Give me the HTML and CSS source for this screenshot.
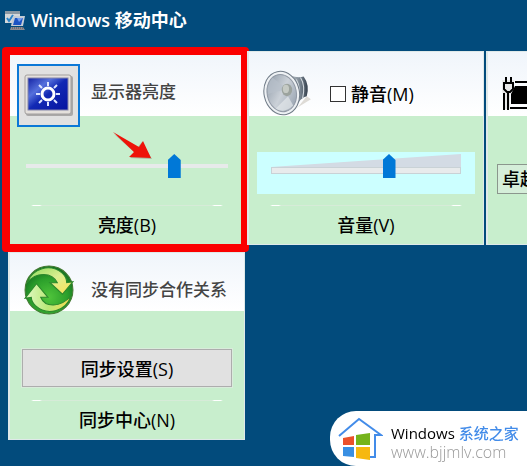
FILE: index.html
```html
<!DOCTYPE html>
<html lang="zh-CN">
<head>
	<meta charset="utf-8">
	<meta name="viewport" content="width=device-width, initial-scale=1.0">
	<title>Windows 移动中心</title>
	<link rel="stylesheet" href="styles.css">
</head>
<body>
	<header class="titlebar">
		<svg class="title-icon" viewBox="0 0 21 21" aria-hidden="true">
			<rect x="0" y="1" width="15" height="12" fill="#d5d8da"/>
			<path d="M0 1h15v3H0z" fill="#8b98a3"/>
			<path d="M2 8l2 3 4-6" fill="none" stroke="#2a83c9" stroke-width="2"/>
			<path d="M8 6h12l-2 10H6z" fill="#c4ccd6"/>
			<path d="M10 8h8l-2 7H8z" fill="#1d54c4"/>
			<path d="M12 8h6l-4 4z" fill="#6f9bee"/>
			<path d="M6 17h12l2 3H5z" fill="#8e8c91"/>
			<path d="M7 18h11" stroke="#514f5d" stroke-dasharray="1 1"/>
		</svg>
		<h1>Windows 移动中心</h1>
	</header>

	<main class="tiles">
		<section class="tile">
			<div class="tile-head">
				<button class="icon-button" type="button" aria-labelledby="brightness-title">
					<svg viewBox="0 0 50 42" width="50" height="42">
						<defs>
							<linearGradient id="screen" x1="0" y1="0" x2="1" y2="1">
								<stop offset="0" stop-color="#1423a4"/>
								<stop offset=".3" stop-color="#5570dc"/>
								<stop offset=".5" stop-color="#1229b4"/>
								<stop offset="1" stop-color="#0613a0"/>
							</linearGradient>
						</defs>
						<rect x="2" y="2" width="47" height="40" rx="2" fill="#aaa8a8"/>
						<rect x="1" y="1" width="46" height="39" rx="2" fill="#e4e0dc" stroke="#a29f9e"/>
						<rect x="4" y="4" width="40" height="32" fill="url(#screen)" stroke="#8485aa"/>
						<circle cx="24" cy="20" r="6" fill="none" stroke="#fff" stroke-width="3"/>
						<path d="M24 8v4M24 28v4M12 20h4M32 20h4M15 11l3 3M30 26l3 3M15 29l3-3M30 14l3-3" stroke="#dde5ff" stroke-width="2"/>
					</svg>
				</button>
				<h2 id="brightness-title">显示器亮度</h2>
			</div>
			<div class="tile-body">
				<div class="control">
					<input class="slider" type="range" id="brightness" min="0" max="100" value="75">
				</div>
				<label class="tile-label" for="brightness">亮度(B)</label>
			</div>
			<div class="highlight"></div>
			<svg class="arrow" viewBox="0 0 42 30" aria-hidden="true">
				<path d="M2 3L25 17L30 11L40 28L18 27L23 22Z" fill="#876d61" opacity=".45"/>
				<path d="M1 1L27 16L31 10L39 27L17 26L22 21Z" fill="#ee1309"/>
			</svg>
		</section>

		<section class="tile">
			<div class="tile-head">
				<svg class="head-icon" viewBox="0 0 48 48" aria-hidden="true">
					<defs>
						<linearGradient id="cone" x1="0" y1="0" x2="1" y2="1">
							<stop offset="0" stop-color="#8995a3"/>
							<stop offset=".5" stop-color="#cbd1d8"/>
							<stop offset="1" stop-color="#8d99a8"/>
						</linearGradient>
						<linearGradient id="magnet" x1="0" y1="0" x2="1" y2="0">
							<stop offset="0" stop-color="#c1c8cd"/>
							<stop offset=".6" stop-color="#75818d"/>
							<stop offset="1" stop-color="#333e4b"/>
						</linearGradient>
					</defs>
					<path d="M28 42L46 31L42 28L34 38Z" fill="#dedbd6"/>
					<path d="M26 8Q34 11 39 9Q45 17 42 28Q37 29 30 38Z" fill="url(#magnet)"/>
					<path d="M36 10Q41 18 38 30M32 12Q37 21 34 32" fill="none" stroke="#d6dce1" stroke-width="1"/>
					<ellipse cx="18" cy="25" rx="17" ry="21" transform="rotate(-12 18 25)" fill="#eef1f4" stroke="#717c88"/>
					<ellipse cx="18" cy="25" rx="14" ry="18" transform="rotate(-12 18 25)" fill="url(#cone)" stroke="#929aa6"/>
					<path d="M23 21L9 10Q3 18 5 26Z" fill="#b8c0ca" opacity=".7"/>
					<path d="M24 28L12 40Q21 45 29 37Z" fill="#e4e8eb" opacity=".7"/>
					<ellipse cx="23" cy="22" rx="5" ry="6" fill="#9ca39e"/>
					<ellipse cx="22" cy="21" rx="3" ry="4" fill="#c5cac4"/>
				</svg>
				<label class="mute"><input type="checkbox">静音(M)</label>
			</div>
			<div class="tile-body">
				<div class="control volume">
					<svg class="wedge" viewBox="0 0 191 13" preserveAspectRatio="none" aria-hidden="true">
						<path d="M0 13L191 0V13Z" fill="#d3dbe4"/>
					</svg>
					<input class="slider boxed" type="range" id="volume" min="0" max="100" value="63">
				</div>
				<label class="tile-label" for="volume">音量(V)</label>
			</div>
		</section>

		<section class="tile">
			<div class="tile-head">
				<svg class="head-icon" viewBox="0 0 50 50" aria-hidden="true">
					<path d="M13 15H50M8 41H50" stroke="#000" stroke-width="2"/>
					<path d="M13 19H50V37H9V27Z" fill="#000"/>
					<path d="M0 13h12v9l-4 5v15H1V27l-2-5z" fill="#e8e8e8"/>
					<path d="M4 10v6M9 10v6" stroke="#000" stroke-width="2"/>
					<path d="M1 16h11M2 16v6l3 3h3l3-3v-6" fill="none" stroke="#000" stroke-width="2"/>
					<path d="M6 25v18M2 26v17" stroke="#000" stroke-width="2"/>
				</svg>
			</div>
			<div class="tile-body">
				<div class="control">
					<select class="plan" aria-labelledby="plan-value">
						<option id="plan-value">卓越</option>
					</select>
				</div>
			</div>
		</section>

		<section class="tile">
			<div class="tile-head">
				<svg class="head-icon" viewBox="0 0 48 48" aria-hidden="true">
					<defs>
						<radialGradient id="orb" cx=".5" cy=".65" r=".6">
							<stop offset="0" stop-color="#50c43b"/>
							<stop offset=".65" stop-color="#2b9f2b"/>
							<stop offset="1" stop-color="#167321"/>
						</radialGradient>
						<linearGradient id="down" x1="0" y1="0" x2="1" y2="1">
							<stop offset="0" stop-color="#8ada5c"/>
							<stop offset=".5" stop-color="#dcef91"/>
							<stop offset="1" stop-color="#ffe152"/>
						</linearGradient>
						<linearGradient id="up" x1="0" y1="0" x2="1" y2="0">
							<stop offset="0" stop-color="#e2fac4"/>
							<stop offset=".5" stop-color="#b9e878"/>
							<stop offset="1" stop-color="#f7db4d"/>
						</linearGradient>
					</defs>
					<circle cx="24" cy="24" r="23" fill="url(#orb)" stroke="#477b34"/>
					<path d="M3 17C8 3 25-2 37 8Q41 12 41 17L47 16L37 28L25 17L32 17C27 7 12 6 3 17Z" fill="url(#down)" stroke="#2b872c"/>
					<path d="M45 30C40 45 22 49 11 39Q7 35 7 31L1 32L12 18L23 31L16 31C20 41 35 41 45 30Z" fill="url(#up)" stroke="#2b872c"/>
				</svg>
				<h2>没有同步合作关系</h2>
			</div>
			<div class="tile-body">
				<div class="control">
					<button class="sync-button" type="button">同步设置(S)</button>
				</div>
				<p class="tile-label">同步中心(N)</p>
			</div>
		</section>
	</main>

	<footer class="brand">
		<svg class="brand-logo" viewBox="0 0 45 43" aria-hidden="true">
			<path d="M1 19L21 2L43 18H37V40H31" fill="none" stroke="#438ce9" stroke-width="2"/>
			<path d="M5 21L16 19V28H5Z" fill="#eb512b"/>
			<path d="M18 18L32 16V28H18Z" fill="#75b41b"/>
			<path d="M5 30H16V40L5 39Z" fill="#398fe3"/>
			<path d="M18 30H32V43L18 41Z" fill="#f6b810"/>
		</svg>
		<div class="brand-text">
			<p class="brand-name">Windows <span>系统之家</span></p>
			<p class="brand-url">www.bjjmlv.com</p>
		</div>
	</footer>
</body>
</html>
```
FILE: styles.css
```css
* {
	box-sizing: border-box;
}
body {
	margin: 0;
	min-height: 100vh;
	overflow: hidden;
	background-color: #024b7c;
	color: #000;
	font-family: "Open Sans", "Noto Sans CJK SC", sans-serif;
	font-size: 18px;
	font-weight: 500;
}
h1, h2, p {
	margin: 0;
}
button, select, input {
	font: inherit;
	color: inherit;
}
.titlebar {
	display: flex;
	align-items: center;
	gap: 5px;
	height: 40px;
	padding-left: 5px;
}
.title-icon {
	width: 21px;
	height: 21px;
}
h1 {
	color: #fff;
	font-size: 18px;
	font-weight: 600;
	line-height: 24px;
}

/* tiles */
.tiles {
	display: grid;
	grid-template-columns: repeat(3, 237px);
	gap: 7px 2px;
	padding: 11px 8px;
}
.tile {
	position: relative;
	background-color: #c8eecd;
	border: 1px solid #dfe9e9;
	border-left-width: 2px;
}
.tile-head {
	display: flex;
	align-items: center;
	gap: 17px;
	height: 64px;
	padding: 16px 14px 0;
	background: linear-gradient(#f0f5fb, #fff);
}
.tile:nth-child(4) .tile-head {
	height: 58px;
}
h2 {
	color: #444;
	font-size: 17px;
	font-weight: 500;
	line-height: 24px;
}
.head-icon {
	flex: none;
	width: 50px;
	height: 50px;
}
.icon-button {
	flex: none;
	display: flex;
	align-items: center;
	justify-content: center;
	width: 63px;
	height: 63px;
	margin: 6px -6px 0 -7px;
	padding: 0;
	background-color: #e1e1e1;
	border: 2px solid #0b78d7;
}
.tile-body {
	padding: 0 8px 6px;
}
.control {
	display: flex;
	align-items: flex-start;
	height: 42px;
	margin-top: 36px;
	padding: 2px 8px 0;
}
.tile-label {
	display: block;
	margin-top: 11px;
	padding-top: 8px;
	text-align: center;
	line-height: 25px;
	background: linear-gradient(90deg, transparent 6%, #fff 7%, #fff 10%, #d6ebd8 11%, #d6ebd8 89%, #fff 90%, #fff 93%, transparent 94%) top / 100% 1px no-repeat;
}

/* sliders */
.slider {
	-webkit-appearance: none;
	appearance: none;
	width: 100%;
	height: 24px;
	margin: 0;
	background: linear-gradient(#e7eaea, #e7eaea) center / 100% 4px no-repeat;
}
.slider::-webkit-slider-thumb {
	-webkit-appearance: none;
	appearance: none;
	width: 13px;
	height: 24px;
	background-color: #0078d7;
	clip-path: polygon(0 6px, 50% 0, 100% 6px, 100% 100%, 0 100%);
}
.volume {
	position: relative;
	margin-right: 0;
	padding: 2px 14px 0;
	background-color: #cff;
}
.wedge {
	position: absolute;
	left: 14px;
	top: 2px;
	width: calc(100% - 28px);
	height: 13px;
}
.boxed {
	position: relative;
	background:
		linear-gradient(#e8ebec, #e8ebec) center 14px / calc(100% - 2px) 5px no-repeat,
		linear-gradient(#c9d2d6, #c9d2d6) center 13px / 100% 7px no-repeat;
}

/* red frame and pointer over the brightness tile */
.highlight {
	position: absolute;
	inset: -5px -5px -8px -8px;
	border: 8px solid #fb0000;
	border-radius: 4px;
	pointer-events: none;
}
.arrow {
	position: absolute;
	left: 102px;
	top: 79px;
	width: 42px;
	height: 30px;
	pointer-events: none;
}

.mute {
	display: flex;
	align-items: center;
	gap: 5px;
	padding-top: 4px;
	line-height: 24px;
}
.mute input {
	-webkit-appearance: none;
	appearance: none;
	width: 16px;
	height: 16px;
	margin: 0;
	background-color: #fff;
	border: 1px solid #333;
}
.plan {
	-webkit-appearance: none;
	appearance: none;
	width: 100%;
	height: 30px;
	padding: 0 4px;
	background-color: #d5eed9;
	border: 1px solid #8b968d;
	border-radius: 0;
}
.tile:nth-child(3) .control {
	align-items: flex-end;
	padding: 0 1px;
}
.tile:nth-child(4) .control {
	align-items: center;
	padding: 0 4px;
}
.sync-button {
	width: 100%;
	height: 38px;
	padding: 0;
	background-color: #e1e1e1;
	border: 1px solid #adadad;
	outline: 1px solid #d9ebdb;
}

/* site badge */
.brand {
	position: fixed;
	right: 0;
	bottom: 0;
	display: flex;
	align-items: center;
	gap: 8px;
	width: 197px;
	height: 55px;
	padding-left: 8px;
	background-color: #fff;
	border-radius: 26px 0 0 26px;
}
.brand-logo {
	flex: none;
	width: 45px;
	height: 43px;
}
.brand-text {
	padding-top: 6px;
	white-space: nowrap;
}
.brand-name {
	font-size: 15px;
	line-height: 20px;
}
.brand-name span {
	color: #438ce9;
}
.brand-url {
	color: #999;
	font-size: 16px;
	font-weight: 300;
	line-height: 18px;
}
```
